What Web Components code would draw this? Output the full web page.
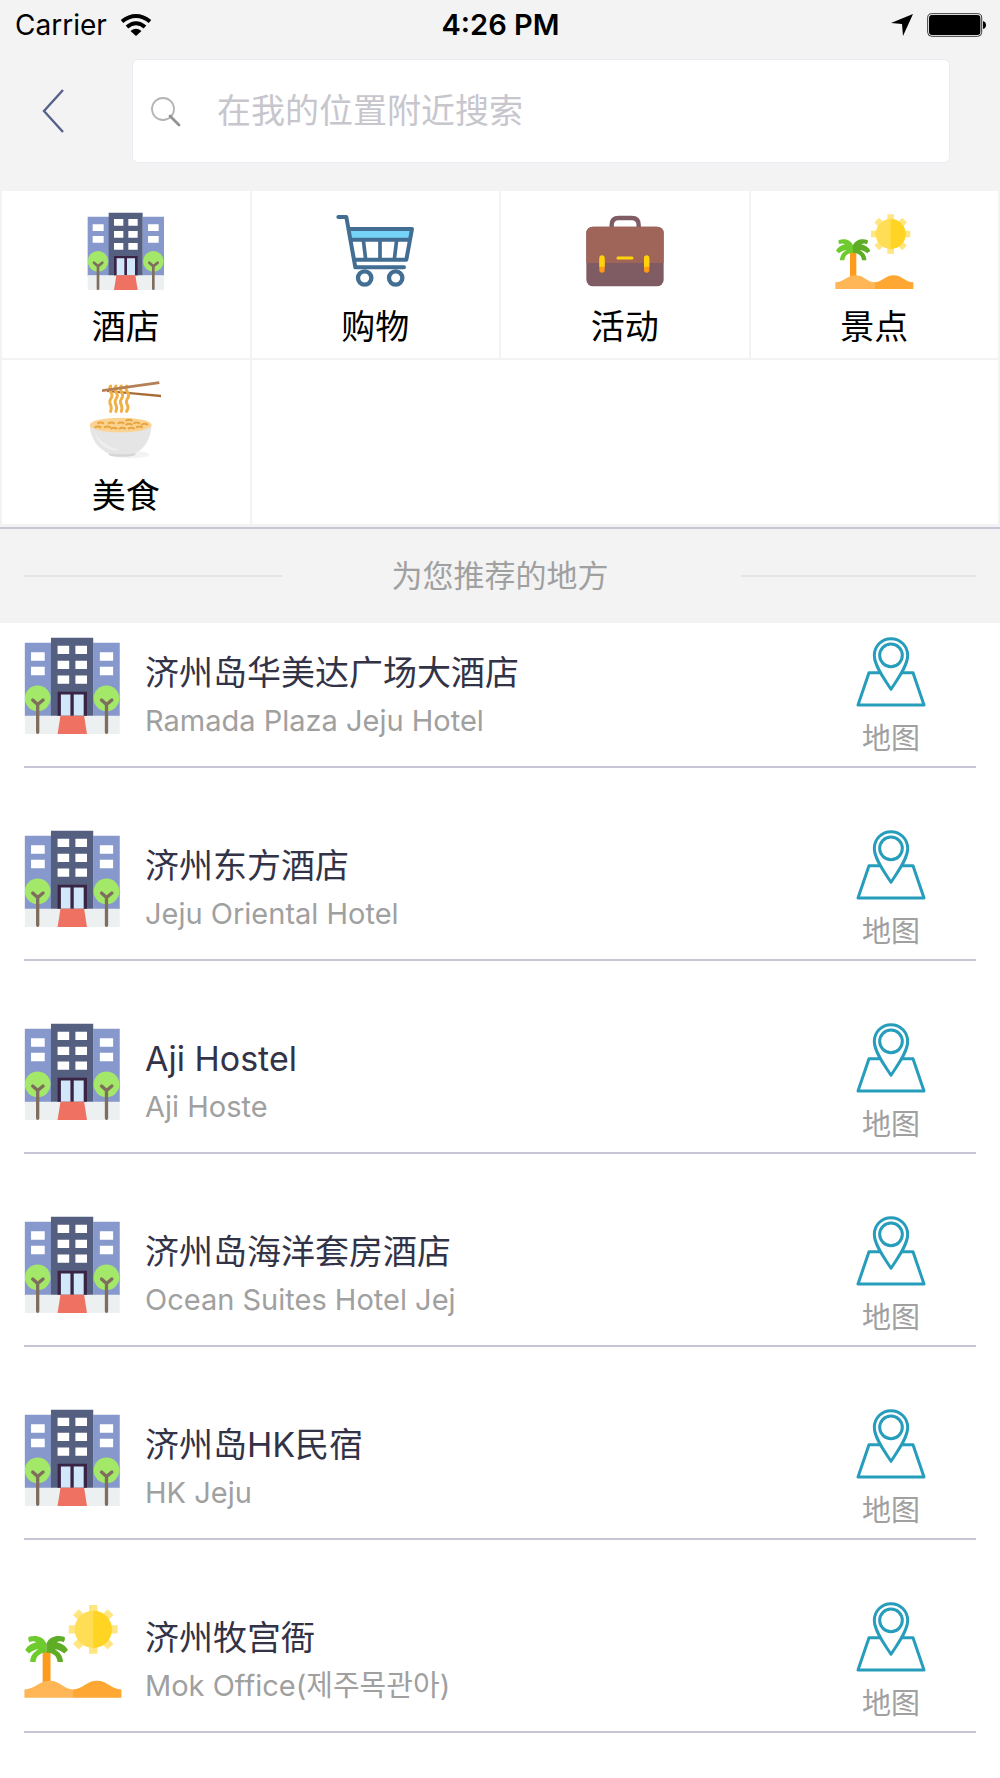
<!DOCTYPE html>
<html lang="zh-CN">
<head>
<meta charset="utf-8">
<meta name="viewport" content="width=device-width, initial-scale=1">
<title>附近搜索</title>
<style>
  body {
    margin: 0;
    min-height: 100vh;
    background: #fff;
    color: #000;
    font-family: Inter, "Noto Sans CJK SC", "Noto Sans CJK KR", sans-serif;
    font-weight: 400;
    --panel: #f3f3f3;
    --rule: #c8c6d6;
    --muted: #a0a0a0;
    --ink: #333347;
  }
</style>
</head>
<body>
<nearby-page></nearby-page>

<script>
const base = `*, *::before { box-sizing: border-box; } svg { display: block; overflow: visible; }
  button, input { font: inherit; color: inherit; border: 0; background: none; padding: 0; margin: 0; }
  a { color: inherit; text-decoration: none; }`;

const icons = {
  hotel: ['259 81 234 234', `
    <path fill="#8798cc" d="M261 95h64v177h-64zM426 95h64v177h-64z"/>
    <path fill="#ecf0f1" d="M261 271h229v44H261z"/>
    <path fill="#556080" d="M324 83h102v188H324z"/>
    <path fill="#fff" d="M276 118h33v20h-33zM276 153h33v20h-33zM442 118h32v20h-32zM442 153h32v20h-32zM340 102h28v20h-28zM383 102h28v20h-28zM340 138h28v20h-28zM383 138h28v20h-28zM340 174h28v20h-28zM383 174h28v20h-28z"/>
    <path fill="#3a2446" d="M340 213h71v58h-71z"/>
    <path fill="#d0e8f9" d="M348 220h23v51h-23zM379 220h24v51h-24z"/>
    <path fill="#ee7161" d="M347 271h57l7 44h-71z"/>
    <circle cx="292" cy="229" r="31" fill="#a4e869"/><circle cx="458" cy="229" r="31" fill="#a4e869"/>
    <path fill="none" stroke="#7f6e5d" stroke-width="8" stroke-linecap="round" d="M292 311v-67m-12-11 12 11 13-11M458 311v-67m-12-11 12 11 13-11"/>`],
  cart: ['258 82 234 234', `
    <path fill="#76d3f8" d="M301 138h181l-6 24H304z"/>
    <path fill="none" stroke="#426e93" stroke-width="12" stroke-linecap="round" stroke-linejoin="round" d="M265 97h24l27 151h146M297 133h189l-17 92H312M304 165h173"/>
    <path fill="none" stroke="#426e93" stroke-width="11" d="m340 166 7 58M390 166v58M440 166l-7 58"/>
    <g fill="#fff" stroke="#426e93" stroke-width="13"><circle cx="344" cy="280" r="20"/><circle cx="437" cy="280" r="20"/></g>`],
  bag: ['258 82 234 234', `
    <path fill="none" stroke="#7f5b63" stroke-width="13" d="M335 130v-9q0-21 21-21h39q21 0 21 21v9"/>
    <rect x="259" y="126" width="232" height="179" rx="20" fill="#7f5b63"/>
    <path fill="#a06559" d="M259 235v-89q0-20 20-20h192q20 0 20 20v89z"/>
    <path stroke="#ffd30c" stroke-width="9" stroke-linecap="round" d="M354 220h42"/>
    <path stroke="#ff9a14" stroke-width="16" stroke-linecap="round" d="M306 226v30M440 226v30"/>
    <path fill="#ffd30c" d="M298 246v-26a8 8 0 0 1 16 0v26zM432 246v-26a8 8 0 0 1 16 0v26z"/>`],
  beach: ['257 80 234 234', `
    <g fill="#ffe680"><path d="M414 87h20v118h-20zM365 136h118v20H365z"/>
    <path transform="rotate(45 424 146)" d="M414 87h20v118h-20zM365 136h118v20H365z"/></g>
    <circle cx="424" cy="146" r="45" fill="#ffde56"/><path fill="#ffd422" d="M424 101a45 45 0 0 1 0 90z"/>
    <path fill="#ff9b1c" d="M302 198h19v80h-19z"/>
    <path fill="#6dcb2d" d="M311 202V180C303 163 286 159 269 164Q265 167 270 177C275 174 282 174 287 177C274 180 264 187 260 196L269 204C276 198 285 194 292 194C278 202 272 212 272 225H285C286 211 295 203 311 202Z"/>
    <path fill="#5fad27" d="M311 202V180C319 163 337 159 354 164Q358 167 353 177C348 174 341 174 336 177C349 180 359 187 363 196L354 204C347 198 338 194 331 194C345 202 351 212 351 225H338C337 211 328 203 311 202Z"/>
    <path fill="#ffb657" d="M258 311v-20c24 0 36-21 61-21s34 21 57 21v20z"/>
    <path fill="#ffa733" d="M375 311v-20c23 0 33-21 58-21s35 21 59 21v20z"/>`],
  noodles: ['260 79 234 234', `
    <ellipse cx="389" cy="300" rx="57" ry="11" fill="#f3f3f3"/>
    <path fill="#d5d5d5" d="M325 292h80v8c-8 8-72 8-80 0z"/>
    <path fill="#e5e5e5" d="M268 212h186c-3 44-24 72-50 84-18 4-65 4-81 0-29-14-52-43-55-84z"/>
    <path fill="#eee" d="M283 232c15 30 38 43 76 54-26 7-67-11-76-54z"/>
    <ellipse cx="361" cy="211" rx="93" ry="22" fill="#fad292"/>
    <path fill="none" stroke="#e9a53d" stroke-width="6" d="M291 207q10-7 20 0M323 207q10-7 20 0M352 207q10-7 20 0M376 199q10-7 20 0M399 207q10-7 20 0M423 211q10-7 20 0M283 219q10-7 20 0M311 219q10-7 20 0M331 223q10-7 20 0M356 223q10-7 20 0M376 211q10-7 20 0M383 223q10-7 20 0M407 219q10-7 20 0"/>
    <path fill="#a86c35" d="m320 106 162 14v8l-162-16z"/>
    <path fill="none" stroke="#efb047" stroke-width="9" stroke-linecap="round" d="M331 94c-9 12 6 20 4 30s-10 12-6 22 7 12 2 24M347 94c-9 12 6 20 4 30s-10 12-6 22 7 12 2 24M363 94c-9 12 6 20 4 30s-10 12-6 22 7 12 2 24M379 94c-9 12 9 20 6 30s-10 12-6 22 7 12 0 24"/>
    <path fill="#b58055" d="m305 104 171-24 2 8-173 24z"/>`],
  map: ['466 350 216 216', `
    <g fill="none" stroke="#279dbc" stroke-width="9" stroke-linejoin="round"><path d="M543 457h-35l-33 97h198l-33-97h-36"/>
    <path d="M574 507c-16-26-50-68-50-102a50 50 0 0 1 100 0c0 34-34 76-50 102z"/><circle cx="574" cy="405" r="34"/></g>`]
};

const define = (name, render) => customElements.define(name, class extends HTMLElement {
  connectedCallback() {
    if (this.shadowRoot) return;
    this.attachShadow({ mode: 'open' }).innerHTML = render(this);
  }
});

define('app-icon', el => {
  const [box, art] = icons[el.getAttribute('name')];
  return `<style>${base} :host { display: block; flex: none; } svg { width: 100%; height: 100%; }</style>
    <svg viewBox="${box}" aria-hidden="true">${art}</svg>`;
});

define('status-bar', () => `<style>${base}
  :host { display: grid; grid-template-columns: 1fr auto 1fr; align-items: center; height: 50px; padding: 0 14px 0 15px; font-size: 28px; line-height: 50px; }
  .left, .right { display: flex; align-items: center; gap: 14px; }
  .right { justify-content: flex-end; }
  .time { font-size: 29px; font-weight: 600; }
</style>
<div class="left"><span>Carrier</span>
  <svg width="30" height="22" viewBox="0 0 30 22" aria-label="Wi-Fi"><g fill="none" stroke="#000" stroke-width="4"><path d="M1 7.500Q15-3.500 29 7.500"/><path d="M6 13q9-7.500 18 0"/></g><path d="M9.500 17q5.500-4.500 11 0L15 22z"/></svg></div>
<span class="time">4:26 PM</span>
<div class="right">
  <svg width="22" height="22" viewBox="0 0 22 22" aria-label="定位"><path d="M22 0 12 22l-1-12L0 9z"/></svg>
  <svg width="59" height="24" viewBox="0 0 59 24" aria-label="电量"><rect x=".7" y=".7" width="54" height="22.600" rx="4" fill="#fff" stroke="#333"/><rect x="2" y="2" width="51.400" height="20" rx="3"/><path d="M56 8q3 1 3 4t-3 4z"/></svg></div>`);

define('search-header', () => `<style>${base}
  :host { display: flex; align-items: center; padding: 9px 50px 28px 0; }
  button { flex: none; width: 132px; height: 104px; padding: 0 0 0 42px; cursor: pointer; }
  label { flex: 1; display: flex; align-items: center; height: 104px; gap: 36px; padding: 0 18px; background: #fff; border: 1px solid #ebebf3; border-radius: 6px; }
  input { flex: 1; min-width: 0; height: 60px; padding-bottom: 2px; font-size: 34px; outline: 0; color: var(--ink); }
  input::placeholder { color: #c7c6cd; opacity: 1; }
</style>
<button aria-label="返回"><svg width="22" height="44" viewBox="0 0 22 44"><path d="M21 1 2 22l19 21" fill="none" stroke="#57628a" stroke-width="2.400"/></svg></button>
<label><svg width="30" height="30" viewBox="0 0 30 30" aria-hidden="true"><circle cx="12" cy="13" r="11" fill="none" stroke="#b4b4b4" stroke-width="1.800"/><path d="m19 20 9 9" stroke="#929292" stroke-width="2.800" stroke-linecap="round"/></svg>
<input type="text" aria-label="搜索" placeholder="在我的位置附近搜索"></label>`);

define('category-tile', el => `<style>${base}
  :host { display: block; background: #fff; }
  a { display: flex; flex-direction: column; align-items: center; gap: 13px; padding-top: 21px; font-size: 34px; line-height: 48px; }
  app-icon { width: 78px; height: 78px; }
</style><a href="#"><app-icon name="${el.getAttribute('icon')}"></app-icon><span><slot></slot></span></a>`);

define('category-grid', () => `<style>${base}
  :host { display: grid; grid-template-columns: repeat(4, 1fr); grid-template-rows: 167px 164px; gap: 2px; padding: 0 2px 3px; border-bottom: 2px solid var(--rule); }
  .rest { grid-column: span 3; background: #fff; }
</style><slot></slot><div class="rest"></div>`);

define('section-title', () => `<style>${base}
  :host { display: grid; grid-template-columns: 258fr 436fr 258fr; align-items: center; height: 94px; padding: 0 24px; background: var(--panel); }
  h2 { margin: 0; text-align: center; font-size: 31px; line-height: 48px; font-weight: inherit; color: var(--muted); }
  i { height: 2px; background: #e3e3e3; }
  i:last-child { width: 91%; justify-self: end; }
</style><i></i><h2><slot></slot></h2><i></i>`);

define('place-item', el => `<style>${base}
  :host { display: flex; gap: 24px; margin: 0 24px 48px; padding: 14px 0 7px; border-bottom: 2px solid var(--rule); }
  .pic { width: 97px; height: 97px; }
  .text { flex: 1; min-width: 0; padding-top: 12px; }
  h3, p { margin: 0; font-weight: inherit; line-height: 48px; }
  h3 { font-size: 34px; color: var(--ink); }
  p { font-size: 29px; color: var(--muted); }
  a { width: 170px; display: flex; flex-direction: column; align-items: center; gap: 10px; font-size: 29px; line-height: 40px; color: var(--muted); }
  a app-icon { width: 72px; height: 72px; }
</style>
<app-icon class="pic" name="${el.getAttribute('icon')}"></app-icon>
<div class="text"><h3><slot name="title"></slot></h3><p><slot></slot></p></div>
<a href="#"><app-icon name="map"></app-icon><span>地图</span></a>`);

const places = [
  ['hotel', '济州岛华美达广场大酒店', 'Ramada Plaza Jeju Hotel'],
  ['hotel', '济州东方酒店', 'Jeju Oriental Hotel'],
  ['hotel', 'Aji Hostel', 'Aji Hoste'],
  ['hotel', '济州岛海洋套房酒店', 'Ocean Suites Hotel Jej'],
  ['hotel', '济州岛HK民宿', 'HK Jeju'],
  ['beach', '济州牧宫衙', 'Mok Office(제주목관아)']
];

define('nearby-page', () => `<style>${base}
  :host { display: block; }
  header { background: var(--panel); }
  main { display: flex; flex-direction: column; }
  place-item:last-child { margin-bottom: 0; }
</style>
<header><status-bar></status-bar><search-header></search-header>
<category-grid>
  <category-tile icon="hotel">酒店</category-tile>
  <category-tile icon="cart">购物</category-tile>
  <category-tile icon="bag">活动</category-tile>
  <category-tile icon="beach">景点</category-tile>
  <category-tile icon="noodles">美食</category-tile>
</category-grid></header>
<section-title>为您推荐的地方</section-title>
<main>${places.map(([icon, name, sub]) => `<place-item icon="${icon}"><span slot="title">${name}</span>${sub}</place-item>`).join('')}</main>`);
</script>
</body>
</html>
